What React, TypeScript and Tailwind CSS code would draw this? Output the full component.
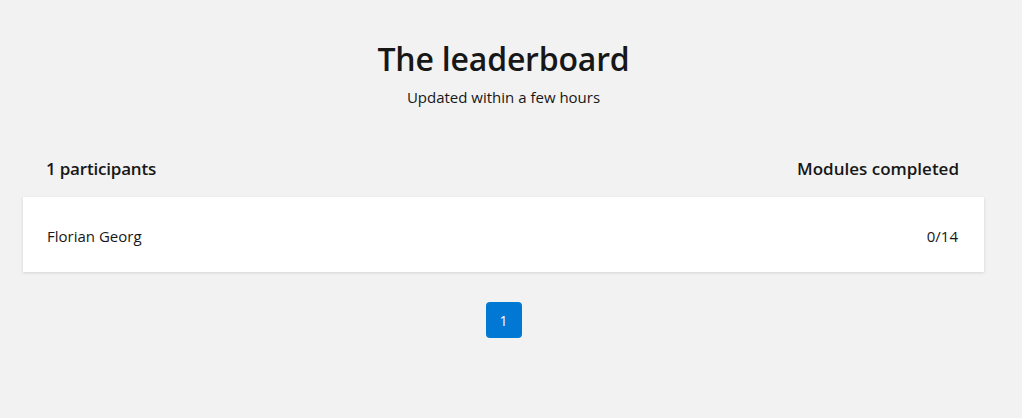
export default function App() {
  return (
    <div className="min-h-[418px] w-full bg-[#f2f2f2] text-[#171717] font-['Open_Sans','Noto_Sans',sans-serif]">
      <div className="w-[1007px] px-[23px] pt-[35px]">
        <div className="flex flex-col items-center">
          <h1 className="text-[32px] leading-[48px] font-semibold tracking-[-0.2px]">The leaderboard</h1>
          <p className="text-[15px] leading-5 mt-[4px]">Updated within a few hours</p>
        </div>
        <div className="mt-[50px] flex items-center justify-between pl-[23px] pr-[25px] pb-[16px] text-[17px] font-semibold leading-6">
          <span className="tracking-[-0.2px]">1 participants</span>
          <span>Modules completed</span>
        </div>
        <div className="bg-white shadow-[0_1px_3px_rgba(0,0,0,0.13)] h-[75px] flex items-center justify-between pl-[24px] pr-[26px] pt-[4px] text-[15px]">
          <span>Florian Georg</span>
          <span>0/14</span>
        </div>
        <div className="flex justify-center mt-[30px]">
          <button className="w-9 h-9 rounded bg-[#0078d4] text-white text-[14px]">1</button>
        </div>
      </div>
    </div>
  );
}
